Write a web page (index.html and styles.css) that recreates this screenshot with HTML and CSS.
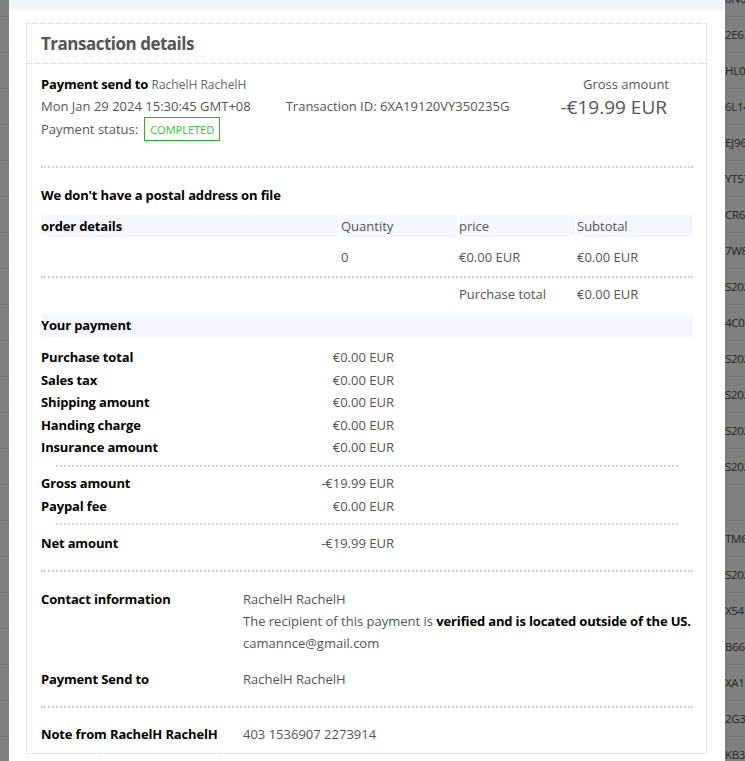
FILE: index.html
```html
<!DOCTYPE html>
<html lang="en">
<head>
<meta charset="utf-8">
<title>Transaction details</title>
<link rel="stylesheet" href="styles.css">
</head>
<body>
  <div class="bg-left">
    <div class="bg-rows">
      <div class="bg-row"></div><div class="bg-row"></div><div class="bg-row"></div><div class="bg-row"></div>
      <div class="bg-row"></div><div class="bg-row"></div><div class="bg-row"></div><div class="bg-row"></div>
      <div class="bg-row"></div><div class="bg-row"></div><div class="bg-row"></div><div class="bg-row"></div>
      <div class="bg-row"></div><div class="bg-row"></div><div class="bg-row"></div><div class="bg-row"></div>
      <div class="bg-row"></div><div class="bg-row"></div><div class="bg-row"></div><div class="bg-row"></div>
      <div class="bg-row"></div><div class="bg-row"></div>
    </div>
  </div>

  <div class="modal">
    <div class="modal-top"></div>
    <div class="modal-body">
      <div class="card">
        <div class="card-head">Transaction details</div>
        <div class="card-body">
          <div class="summary">
            <div class="summary-main">
              <div class="line"><span class="strong">Payment send to</span> <span class="name-sm">RachelH RachelH</span></div>
              <div class="line">Mon Jan 29 2024 15:30:45 GMT+08<span class="txn">Transaction ID: 6XA19120VY350235G</span></div>
              <div class="line-status"><span>Payment status:</span><span class="badge">COMPLETED</span></div>
            </div>
            <div class="summary-amount">
              <div class="amount-label">Gross amount</div>
              <div class="amount-value">-€19.99 EUR</div>
            </div>
          </div>

          <div class="sep sep-top"></div>

          <div class="note-title strong">We don't have a postal address on file</div>

          <div class="grid4 order-head">
            <div class="head-cell strong">order details</div>
            <div class="head-cell">Quantity</div>
            <div class="head-cell">price</div>
            <div class="head-cell">Subtotal</div>
          </div>
          <div class="grid4 order-row">
            <div></div>
            <div>0</div>
            <div>€0.00 EUR</div>
            <div>€0.00 EUR</div>
          </div>
          <div class="grid4 order-total">
            <div></div>
            <div></div>
            <div>Purchase total</div>
            <div>€0.00 EUR</div>
          </div>

          <div class="section-bar strong">Your payment</div>

          <div class="pay-list pay-first">
            <div class="strong">Purchase total</div><div class="pay-val">€0.00 EUR</div>
            <div class="strong">Sales tax</div><div class="pay-val">€0.00 EUR</div>
            <div class="strong">Shipping amount</div><div class="pay-val">€0.00 EUR</div>
            <div class="strong">Handing charge</div><div class="pay-val">€0.00 EUR</div>
            <div class="strong">Insurance amount</div><div class="pay-val">€0.00 EUR</div>
          </div>
          <div class="sep sep-inner sep-a"></div>
          <div class="pay-list pay-second">
            <div class="strong">Gross amount</div><div class="pay-val">-€19.99 EUR</div>
            <div class="strong">Paypal fee</div><div class="pay-val">€0.00 EUR</div>
          </div>
          <div class="sep sep-inner sep-b"></div>
          <div class="pay-list pay-third">
            <div class="strong">Net amount</div><div class="pay-val">-€19.99 EUR</div>
          </div>

          <div class="sep sep-contact"></div>

          <div class="info-row info-contact">
            <div class="strong">Contact information</div>
            <div>
              <div>RachelH RachelH</div>
              <div>The recipient of this payment is <span class="strong">verified and is located outside of the US.</span></div>
              <div>camannce@gmail.com</div>
            </div>
          </div>
          <div class="info-row info-send">
            <div class="strong">Payment Send to</div>
            <div>RachelH RachelH</div>
          </div>

          <div class="sep sep-note"></div>

          <div class="info-row info-note">
            <div class="strong">Note from RachelH RachelH</div>
            <div>403 1536907 2273914</div>
          </div>
        </div>
      </div>
    </div>
  </div>

  <div class="bg-right">
    <div class="bg-rows">
      <div class="bg-row">0N0</div>
      <div class="bg-row">2E63</div>
      <div class="bg-row">HL0</div>
      <div class="bg-row">6L14</div>
      <div class="bg-row">EJ96</div>
      <div class="bg-row">YT57</div>
      <div class="bg-row">CR6</div>
      <div class="bg-row">7W8</div>
      <div class="bg-row">S202</div>
      <div class="bg-row">4C01</div>
      <div class="bg-row">S202</div>
      <div class="bg-row">S202</div>
      <div class="bg-row">S202</div>
      <div class="bg-row">S202</div>
      <div class="bg-row"></div>
      <div class="bg-row">TM6</div>
      <div class="bg-row">S202</div>
      <div class="bg-row">X54</div>
      <div class="bg-row">B66</div>
      <div class="bg-row">XA1</div>
      <div class="bg-row">2G3</div>
      <div class="bg-row">KB3</div>
    </div>
  </div>
</body>
</html>
```

FILE: styles.css
```css
* {
  box-sizing: border-box;
}

html,
body {
  margin: 0;
  padding: 0;
}

body {
  width: 745px;
  height: 761px;
  overflow: hidden;
  display: flex;
  background: #808080;
  font-family: "Open Sans", "Noto Sans", sans-serif;
  font-size: 13px;
  color: #555;
}

/* dimmed table behind the modal */
.bg-left {
  width: 9px;
  flex: none;
  overflow: hidden;
}

.bg-right {
  flex: 1;
  overflow: hidden;
}

.bg-rows {
  margin-top: -19px;
}

.bg-row {
  height: 36px;
  border-bottom: 1px solid #767676;
  line-height: 35px;
  font-size: 11.5px;
  letter-spacing: -0.3px;
  color: #262626;
  white-space: nowrap;
}

/* modal */
.modal {
  width: 716px;
  flex: none;
  background: #fff;
  display: flex;
  flex-direction: column;
}

.modal-top {
  height: 10px;
  background: #f4f5f9;
}

.modal-body {
  padding: 13px 18px 0 17px;
}

.card {
  border: 1px dotted #d4d4d4;
}

.card-head {
  height: 40px;
  padding-left: 14px;
  border-bottom: 1px dotted #d4d4d4;
  display: flex;
  align-items: center;
  font-size: 17px;
  font-weight: 700;
  letter-spacing: -0.5px;
  color: #555;
}

.card-body {
  padding: 9px 13px 8px 14px;
}

.strong {
  font-weight: 700;
  color: #000;
  letter-spacing: -0.15px;
}

/* summary */
.summary {
  display: flex;
  justify-content: space-between;
}

.line {
  height: 22px;
  line-height: 22px;
  white-space: nowrap;
}

.name-sm {
  font-size: 12px;
  color: #666;
}

.txn {
  margin-left: 35px;
}

.line-status {
  height: 24px;
  display: flex;
  align-items: center;
}

.badge {
  margin-left: 6px;
  height: 24px;
  padding: 0 5px;
  border: 1px solid #2bb52b;
  color: #33c433;
  font-size: 11px;
  display: inline-flex;
  align-items: center;
}

.summary-amount {
  padding-right: 24px;
  text-align: right;
}

.amount-label {
  line-height: 22px;
}

.amount-value {
  font-size: 19px;
  line-height: 24px;
  margin-right: 2px;
}

/* separators */
.sep {
  border-top: 2px dotted #d2d2d2;
}

.sep-top {
  margin-top: 25px;
}

.sep-inner {
  margin-left: 15px;
  margin-right: 15px;
}

.sep-a {
  margin-top: 6.5px;
}

.sep-b {
  margin-top: 6px;
}

.sep-contact {
  margin-top: 15px;
}

.sep-note {
  margin-top: 16px;
}

.note-title {
  margin-top: 16px;
  line-height: 22px;
}

/* order table */
.grid4 {
  display: grid;
  grid-template-columns: 298px 116px 116px 116px;
  column-gap: 2px;
  line-height: 22px;
}

.order-head {
  margin-top: 9px;
}

.head-cell {
  background: #f5f6fe;
}

.order-row {
  padding: 9px 0 8px;
  border-bottom: 2px dotted #d2d2d2;
}

.order-total {
  padding-top: 5px;
}

.section-bar {
  margin-top: 9px;
  line-height: 23px;
  background: #f5f6fe;
}

/* payment list */
.pay-list {
  display: grid;
  grid-template-columns: 220px 133px;
  line-height: 22.5px;
}

.pay-first {
  margin-top: 9px;
}

.pay-second {
  margin-top: 5px;
}

.pay-third {
  margin-top: 7px;
}

.pay-val {
  text-align: right;
}

/* contact info */
.info-row {
  display: grid;
  grid-template-columns: 202px 1fr;
  line-height: 22px;
}

.info-contact {
  margin-top: 16px;
}

.info-send {
  margin-top: 14px;
}

.info-note {
  margin-top: 15px;
}
```
